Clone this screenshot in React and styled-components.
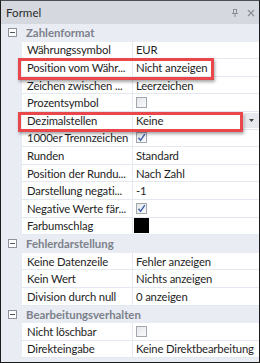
import React from 'react'
import styled, { createGlobalStyle } from 'styled-components'

const Global = createGlobalStyle`
  html, body { margin: 0; padding: 0; background: #fff; }
  body { font-family: Lato, 'Noto Sans', sans-serif; }
`

const ROW = 17.6

const Panel = styled.div`
  position: relative;
  box-sizing: border-box;
  width: 260px;
  height: 363px;
  border: 1px solid #1c1c1c;
  border-top-color: #4a4d52;
  background: #e9ecf3;
  display: flex;
  flex-direction: column;
  overflow: hidden;
`

const TitleBar = styled.div`
  height: 23px;
  flex: none;
  background: #d5d8de;
  display: flex;
  align-items: center;
  justify-content: space-between;
  padding: 0 4px 0 5px;
  font-size: 11.6px;
  color: #2b2b2b;
`

const TitleIcons = styled.div`
  display: flex;
  gap: 8px;
  align-items: center;
`

const Category = styled.div`
  height: ${ROW}px;
  display: flex;
  align-items: center;
  font-size: 11.4px;
  font-weight: 700;
  color: #7c818b;
`

const Toggle = styled.span`
  box-sizing: border-box;
  width: 9px;
  height: 9px;
  margin: 0 9px 0 7px;
  border: 1px solid #8e939b;
  background: #fff;
  position: relative;
  &::after {
    content: '';
    position: absolute;
    left: 1px;
    right: 1px;
    top: 3px;
    height: 1px;
    background: #555a62;
  }
`

const Row = styled.div`
  height: ${ROW}px;
  display: grid;
  grid-template-columns: 21px 111px 1fr;
  font-size: 11.3px;
  letter-spacing: -0.15px;
  color: #1e1e1e;
`

const Cell = styled.div`
  box-sizing: border-box;
  background: #fff;
  border-bottom: 1px solid #e4e8f0;
  display: flex;
  align-items: center;
  white-space: nowrap;
  overflow: hidden;
  padding-left: ${p => p.$pad}px;
  border-right: ${p => (p.$divider ? '1px solid #e4e8f0' : 'none')};
`

const ValueWrap = styled(Cell)`
  justify-content: space-between;
  padding-right: 0;
`

const DropButton = styled.span`
  width: 15px;
  height: 15px;
  background: #e7e9ee;
  display: flex;
  align-items: center;
  justify-content: center;
`

const Box = styled.span`
  box-sizing: border-box;
  width: 11px;
  height: 11px;
  border: 1px solid #a2a7ae;
  background: linear-gradient(135deg, #e4e6ea, #fbfbfc);
  display: flex;
  align-items: center;
  justify-content: center;
  margin-left: 2px;
`

const Swatch = styled.span`
  width: 15px;
  height: 15px;
  background: #000;
`

const Mark = styled.div`
  position: absolute;
  box-sizing: border-box;
  border: 3px solid #e8474c;
  box-shadow: 1px 2px 3px rgba(0, 0, 0, 0.35);
  pointer-events: none;
`

const Check = () => (
  <svg width="9" height="9" viewBox="0 0 9 9">
    <path d="M1.5 4.8 L3.6 7.4 L7.8 1.2" fill="none" stroke="#3b5fa9" strokeWidth="1.4" />
  </svg>
)

const Pin = () => (
  <svg width="8" height="8" viewBox="0 0 8 8">
    <path d="M2 0.5 H6 M2.5 0.5 V4.5 M5.5 0.5 V4.5 M1 4.5 H7 M4 4.5 V8" fill="none" stroke="#8a8e96" strokeWidth="1" />
  </svg>
)

const Close = () => (
  <svg width="8" height="8" viewBox="0 0 8 8">
    <path d="M1 1 L7 7 M7 1 L1 7" stroke="#8a8e96" strokeWidth="1.2" />
  </svg>
)

const Arrow = () => (
  <svg width="5" height="3" viewBox="0 0 5 3">
    <path d="M0 0 H5 L2.5 3 Z" fill="#444" />
  </svg>
)

const sections = [
  {
    title: 'Zahlenformat',
    rows: [
      ['Währungssymbol', 'EUR'],
      ['Position vom Währ...', 'Nicht anzeigen'],
      ['Zeichen zwischen ...', 'Leerzeichen'],
      ['Prozentsymbol', { box: false }],
      ['Dezimalstellen', 'Keine', true],
      ['1000er Trennzeichen', { box: true }],
      ['Runden', 'Standard'],
      ['Position der Rundu...', 'Nach Zahl'],
      ['Darstellung negati...', '-1'],
      ['Negative Werte fär...', { box: true }],
      ['Farbumschlag', { swatch: true }],
    ],
  },
  {
    title: 'Fehlerdarstellung',
    rows: [
      ['Keine Datenzeile', 'Fehler anzeigen'],
      ['Kein Wert', 'Nichts anzeigen'],
      ['Division durch null', '0 anzeigen'],
    ],
  },
  {
    title: 'Bearbeitungsverhalten',
    rows: [
      ['Nicht löschbar', { box: false }],
      ['Direkteingabe', 'Keine Direktbearbeitung'],
    ],
  },
]

const renderValue = v => {
  if (typeof v === 'string') return v
  if (v.swatch) return <Swatch />
  return <Box>{v.box && <Check />}</Box>
}

const App = () => {
  return (
    <>
      <Global />
      <Panel>
        <TitleBar>
          <span>Formel</span>
          <TitleIcons>
            <Pin />
            <Close />
          </TitleIcons>
        </TitleBar>
        {sections.map(s => (
          <React.Fragment key={s.title}>
            <Category>
              <Toggle />
              {s.title}
            </Category>
            {s.rows.map(([name, value, drop]) => (
              <Row key={name}>
                <span />
                <Cell $pad={5} $divider>{name}</Cell>
                {drop ? (
                  <ValueWrap $pad={3}>
                    {value}
                    <DropButton>
                      <Arrow />
                    </DropButton>
                  </ValueWrap>
                ) : (
                  <Cell $pad={typeof value === 'string' ? 3 : 1}>{renderValue(value)}</Cell>
                )}
              </Row>
            ))}
          </React.Fragment>
        ))}
        <Mark style={{ left: 17, top: 57, width: 196, height: 22 }} />
        <Mark style={{ left: 17, top: 111, width: 225, height: 20 }} />
      </Panel>
    </>
  )
}

export default App
